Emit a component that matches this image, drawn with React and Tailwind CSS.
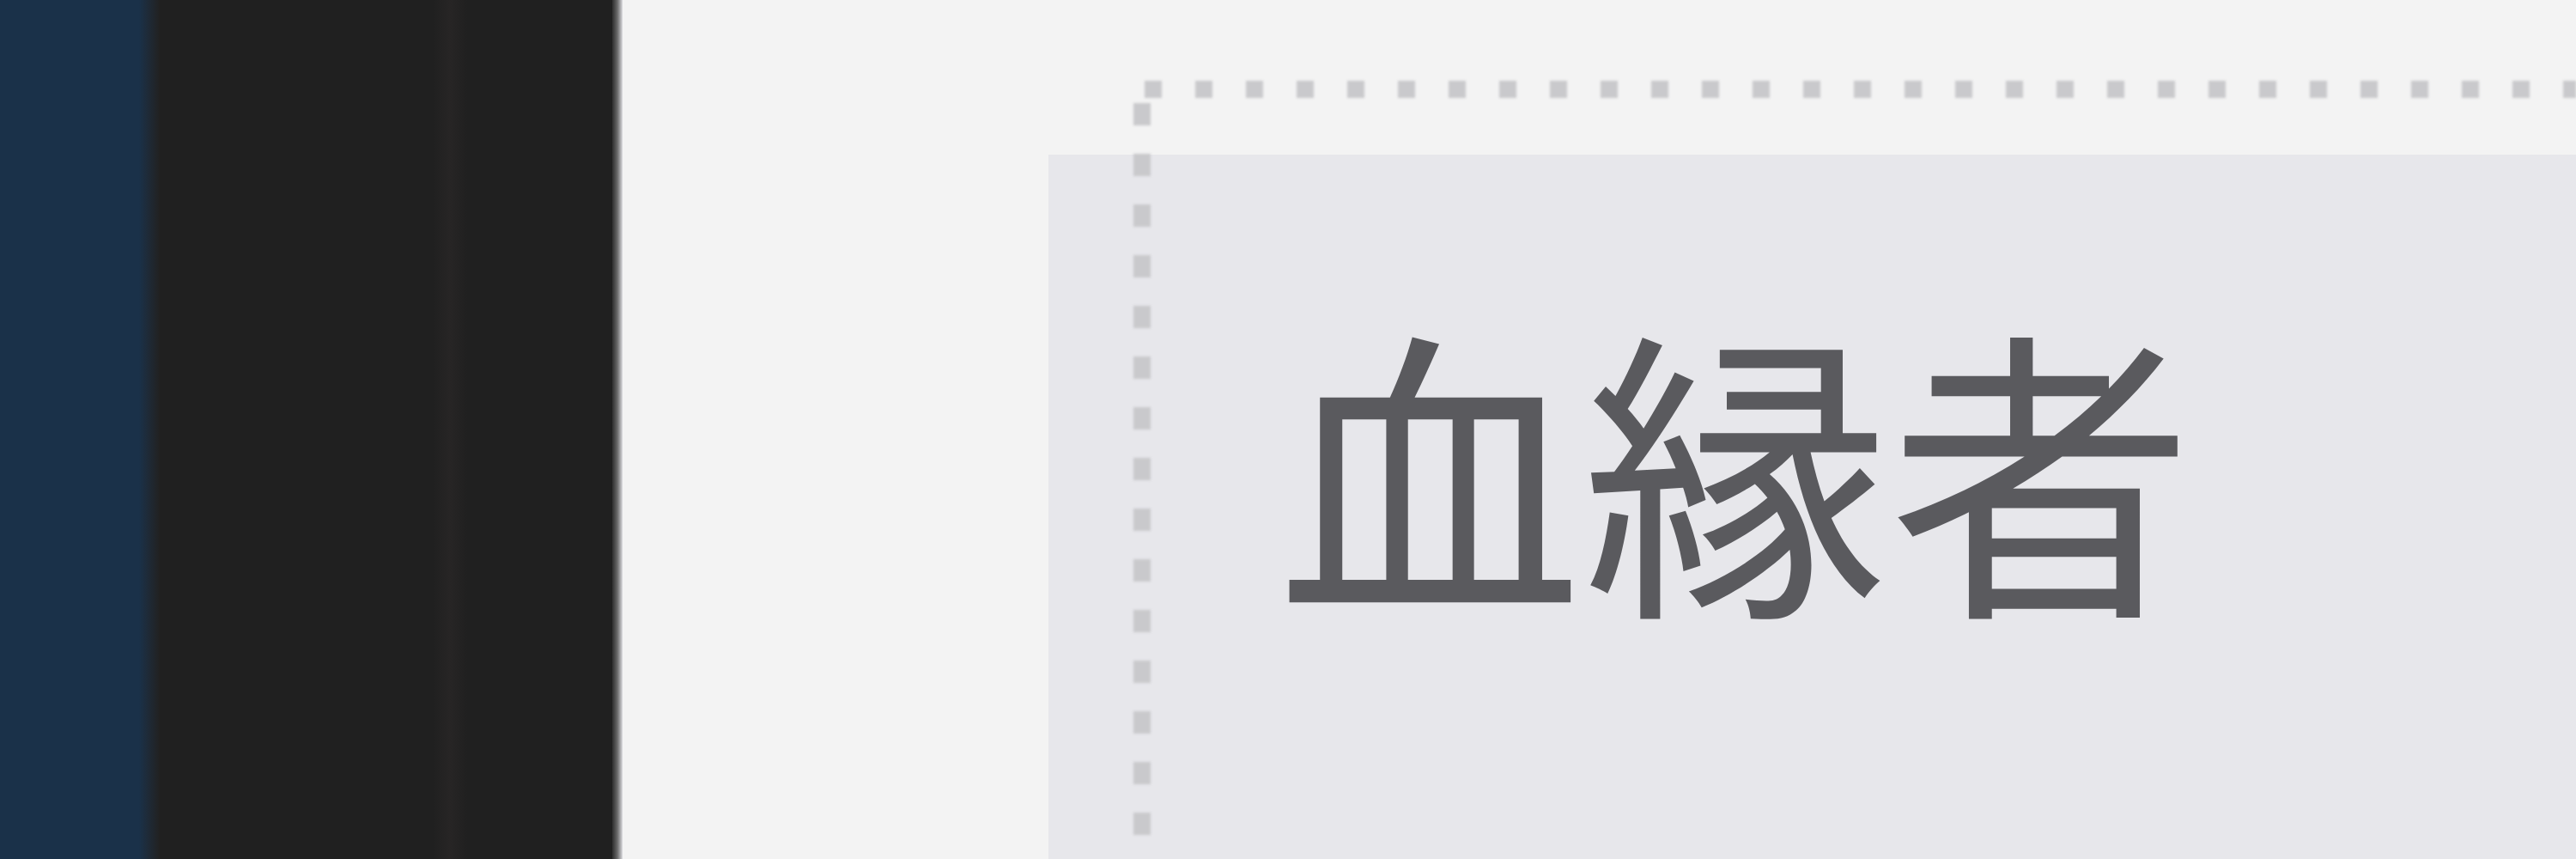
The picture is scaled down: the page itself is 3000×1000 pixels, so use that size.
export default function App() {
  return (
    <div className="flex h-[1000px] w-[3000px] overflow-hidden bg-[#f3f3f3]">
      {/* blue rail */}
      <div className="w-[162px] shrink-0 bg-[#1a3149]" />
      <div className="w-[24px] shrink-0 bg-gradient-to-r from-[#1a3149] to-[#212121]" />
      {/* dark panel */}
      <div className="flex w-[527px] shrink-0 bg-[#202020]">
        <div className="w-[318px] shrink-0" />
        <div className="w-[40px] shrink-0 bg-gradient-to-r from-[#202020] via-[#272525] to-[#202020]" />
      </div>
      {/* divider */}
      <div className="w-[12px] shrink-0 bg-gradient-to-r from-[#2e2e2e] via-[#6a6a6a] to-[#dcdce0]" />
      {/* light workspace */}
      <div className="relative flex flex-1 flex-col bg-[radial-gradient(ellipse_520px_260px_at_1770px_0px,#fcf1ee,transparent),#f3f3f3]">
        <div className="h-[180px] shrink-0 pt-[94px] pl-[608px]">
          <div className="h-[20px] w-full blur-[1.5px] bg-[repeating-linear-gradient(90deg,#c9c9cc_0_20px,transparent_20px_59px)]" />
        </div>
        <div className="ml-[496px] flex-1 bg-[#e7e7eb] pl-[266px] pt-[179px]">
          <div
            className="text-[356px] leading-none font-normal text-[#5a5a5e] whitespace-nowrap"
            style={{ fontFamily: '"Noto Sans CJK JP", "Noto Sans CJK SC", sans-serif' }}
          >
            血縁者
          </div>
        </div>
        {/* vertical guide dots overlay */}
        <div className="absolute left-[595px] top-[120px] bottom-0 w-[20px] blur-[1.5px] bg-[repeating-linear-gradient(180deg,#c9c9cc_0_26px,transparent_26px_59px)]" />
      </div>
    </div>
  );
}
